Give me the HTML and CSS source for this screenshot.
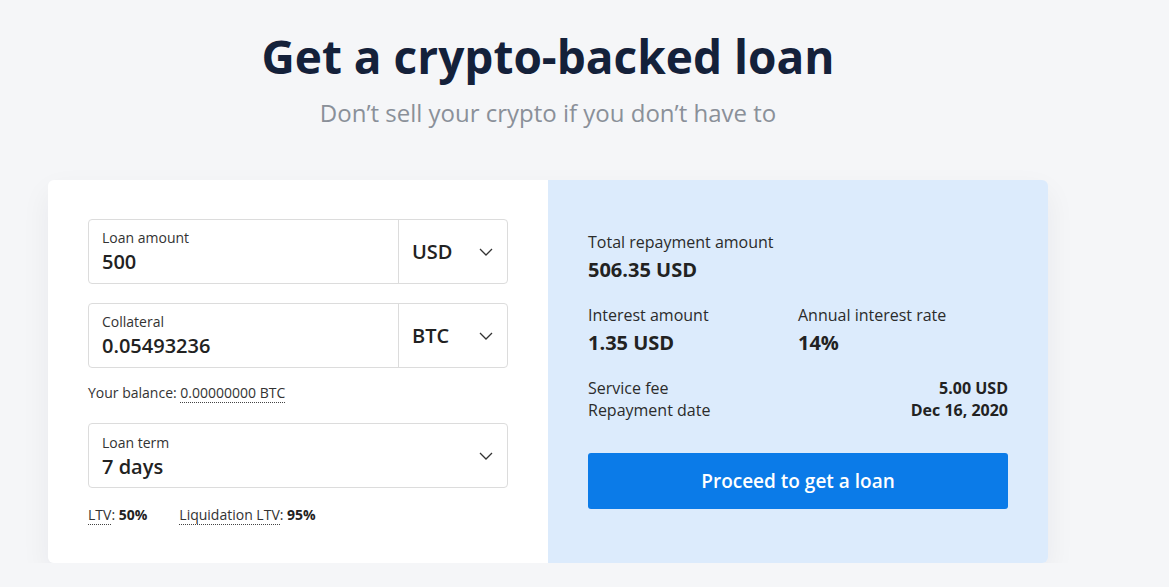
FILE: index.html
```html
<!DOCTYPE html>
<html lang="en">
<head>
    <meta charset="UTF-8">
    <meta name="viewport" content="width=device-width, initial-scale=1.0">
    <title>Get a crypto-backed loan</title>
    <link rel="stylesheet" href="styles.css">
</head>
<body>
    <div class="page">
        <header class="intro">
            <h1>Get a crypto-backed loan</h1>
            <p>Don’t sell your crypto if you don’t have to</p>
        </header>

        <section class="card">
            <!-- Loan form -->
            <div class="form-side">
                <div class="field">
                    <div class="field-main">
                        <span class="field-label">Loan amount</span>
                        <span class="field-value">500</span>
                    </div>
                    <div class="field-select">
                        <span>USD</span>
                        <svg class="chevron" width="14" height="8" viewBox="0 0 14 8"><path d="M1 1l6 6 6-6" fill="none" stroke="#333" stroke-width="1.3"/></svg>
                    </div>
                </div>

                <div class="field">
                    <div class="field-main">
                        <span class="field-label">Collateral</span>
                        <span class="field-value">0.05493236</span>
                    </div>
                    <div class="field-select">
                        <span>BTC</span>
                        <svg class="chevron" width="14" height="8" viewBox="0 0 14 8"><path d="M1 1l6 6 6-6" fill="none" stroke="#333" stroke-width="1.3"/></svg>
                    </div>
                </div>

                <p class="balance">Your balance: <span class="dotted">0.00000000 BTC</span></p>

                <div class="field field-term">
                    <div class="field-main">
                        <span class="field-label">Loan term</span>
                        <span class="field-value">7 days</span>
                    </div>
                    <svg class="chevron term-chevron" width="14" height="8" viewBox="0 0 14 8"><path d="M1 1l6 6 6-6" fill="none" stroke="#333" stroke-width="1.3"/></svg>
                </div>

                <p class="ltv">
                    <span><span class="dotted">LTV</span>: <b>50%</b></span>
                    <span><span class="dotted">Liquidation LTV</span>: <b>95%</b></span>
                </p>
            </div>

            <!-- Summary -->
            <div class="summary-side">
                <div class="stat">
                    <span class="stat-label">Total repayment amount</span>
                    <span class="stat-value">506.35 USD</span>
                </div>
                <div class="stat-row">
                    <div class="stat">
                        <span class="stat-label">Interest amount</span>
                        <span class="stat-value">1.35 USD</span>
                    </div>
                    <div class="stat">
                        <span class="stat-label">Annual interest rate</span>
                        <span class="stat-value">14%</span>
                    </div>
                </div>
                <div class="details">
                    <div class="detail"><span>Service fee</span><b>5.00 USD</b></div>
                    <div class="detail"><span>Repayment date</span><b>Dec 16, 2020</b></div>
                </div>
                <button type="button" class="proceed">Proceed to get a loan</button>
            </div>
        </section>
    </div>
</body>
</html>
```

FILE: styles.css
```css
/* Basic CSS styles */
body {
    font-family: "Open Sans", "Liberation Sans", sans-serif;
    margin: 0;
    padding: 0;
    background-color: #f5f6f8;
    color: #2b2b2b;
}
.page {
    width: 1000px;
    margin-left: 48px;
    padding-top: 29px;
}
.intro {
    text-align: center;
    margin-bottom: 51px;
}
.intro h1 {
    margin: 0;
    font-size: 46px;
    line-height: 55px;
    font-weight: 700;
    color: #14213a;
}
.intro p {
    margin: 13px 0 0;
    font-size: 24px;
    line-height: 32px;
    color: #8a9099;
}
.card {
    display: flex;
    border-radius: 6px;
    box-shadow: 0 12px 30px rgba(20, 30, 50, 0.06);
}
.form-side {
    width: 500px;
    box-sizing: border-box;
    padding: 39px 40px 38px;
    background-color: #fff;
    border-radius: 6px 0 0 6px;
}
.summary-side {
    flex: 1;
    display: flex;
    flex-direction: column;
    padding: 51px 40px 0;
    background-color: #dcebfc;
    border-radius: 0 6px 6px 0;
}
.field {
    display: flex;
    height: 65px;
    box-sizing: border-box;
    border: 1px solid #dcdcdc;
    border-radius: 4px;
    margin-bottom: 19px;
}
.field-main {
    flex: 1;
    display: flex;
    flex-direction: column;
    padding: 8px 13px 0;
}
.field-label {
    font-size: 14px;
    line-height: 20px;
    color: #333;
}
.field-value {
    font-size: 20px;
    line-height: 28px;
    font-weight: 600;
    color: #222;
}
.field-select {
    width: 109px;
    box-sizing: border-box;
    border-left: 1px solid #dcdcdc;
    display: flex;
    align-items: center;
    justify-content: space-between;
    padding: 0 14px 0 13px;
    font-size: 20px;
    font-weight: 600;
    color: #222;
}
.chevron {
    display: block;
}
.field-term {
    align-items: center;
    margin-bottom: 0;
}
.field-term .field-main {
    padding-top: 9px;
    align-self: stretch;
}
.term-chevron {
    margin-right: 14px;
}
.balance {
    margin: -4px 0 20px;
    font-size: 14px;
    line-height: 20px;
    color: #333;
}
.dotted {
    border-bottom: 1px dotted #444;
}
.ltv {
    margin: 17px 0 0;
    font-size: 14px;
    line-height: 20px;
    color: #333;
    display: flex;
    gap: 32px;
}
.ltv b {
    font-weight: 700;
    color: #222;
}
.stat {
    display: flex;
    flex-direction: column;
}
.stat-label {
    font-size: 16px;
    line-height: 22px;
    color: #2b2b2b;
    margin-bottom: 3px;
}
.stat-value {
    font-size: 20px;
    line-height: 28px;
    font-weight: 700;
    color: #222;
}
.stat-row {
    display: flex;
    margin-top: 20px;
}
.stat-row .stat {
    width: 210px;
}
.details {
    margin-top: 20px;
}
.detail {
    display: flex;
    justify-content: space-between;
    font-size: 16px;
    line-height: 22px;
}
.detail b {
    font-weight: 700;
    color: #222;
}
.proceed {
    margin-top: 32px;
    height: 56px;
    border: none;
    border-radius: 3px;
    background-color: #0b7be8;
    color: #fff;
    font-family: inherit;
    font-size: 19px;
    font-weight: 600;
    cursor: pointer;
}
```
